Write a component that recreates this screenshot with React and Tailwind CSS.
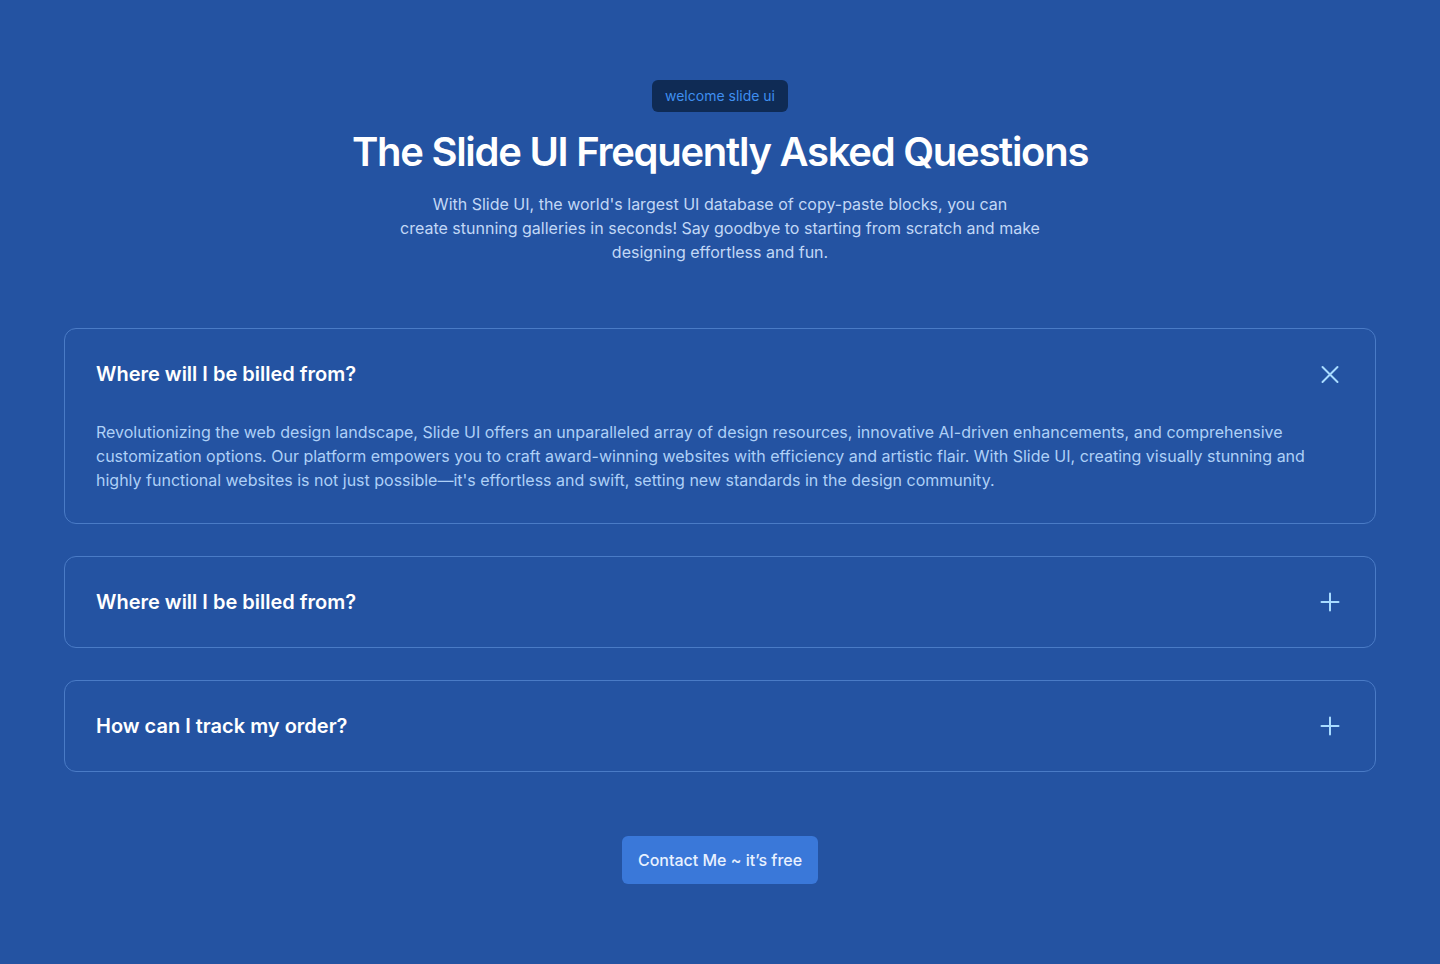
import React from "react";

const XIcon = () => (
  <svg width="24" height="24" viewBox="0 0 24 24" fill="none" stroke="currentColor" strokeWidth="2" strokeLinecap="round">
    <path d="M4.5 5L19.5 20M19.5 5L4.5 20" />
  </svg>
);
const PlusIcon = () => (
  <svg width="24" height="24" viewBox="0 0 24 24" fill="none" stroke="currentColor" strokeWidth="2" strokeLinecap="round">
    <path d="M12 3.5V20.5M3.5 12H20.5" />
  </svg>
);

const Card = ({ q, a, open }) => (
  <div className="rounded-xl border border-[#4a7bc6] p-[31px]">
    <div className="flex items-center justify-between">
      <h3 className="text-[20px] leading-7 font-semibold text-white">{q}</h3>
      <span className="flex h-6 w-6 items-center justify-center text-[#a9dcff] mr-[2px]">
        {open ? <XIcon /> : <PlusIcon />}
      </span>
    </div>
    {open && (
      <p className="mt-8 pr-8 text-base leading-6 text-[#aed0f7]">{a}</p>
    )}
  </div>
);

export default function App() {
  return (
    <div
      className="min-h-[964px] w-full bg-[#2453a2] px-16 pt-20 pb-20"
      style={{ fontFamily: "Inter, 'Noto Sans', sans-serif" }}
    >
      <div className="flex flex-col items-center text-center">
        <span className="rounded-md bg-[#0f2b55] px-[13px] py-[6px] text-sm leading-5 text-[#3f8ff0]">
          welcome slide ui
        </span>
        <h1 className="mt-4 text-[40px] leading-[48px] font-semibold tracking-[-0.032em] text-white">
          The Slide UI Frequently Asked Questions
        </h1>
        <p className="mt-4 max-w-[660px] text-base leading-6 text-[#c2d8f6]">
          With Slide UI, the world's largest UI database of copy-paste blocks, you can
          <br />
          create stunning galleries in seconds! Say goodbye to starting from scratch and make designing effortless and fun.
        </p>
      </div>

      <div className="mt-16 flex flex-col gap-8">
        <Card
          open
          q="Where will I be billed from?"
          a="Revolutionizing the web design landscape, Slide UI offers an unparalleled array of design resources, innovative AI-driven enhancements, and comprehensive customization options. Our platform empowers you to craft award-winning websites with efficiency and artistic flair. With Slide UI, creating visually stunning and highly functional websites is not just possible—it's effortless and swift, setting new standards in the design community."
        />
        <Card q="Where will I be billed from?" />
        <Card q="How can I track my order?" />
      </div>

      <div className="mt-16 flex justify-center">
        <button className="rounded-md bg-[#3a78d9] px-4 py-3 text-base leading-6 font-medium text-[#e8f1ff]">
          Contact Me ~ it’s free
        </button>
      </div>
    </div>
  );
}
